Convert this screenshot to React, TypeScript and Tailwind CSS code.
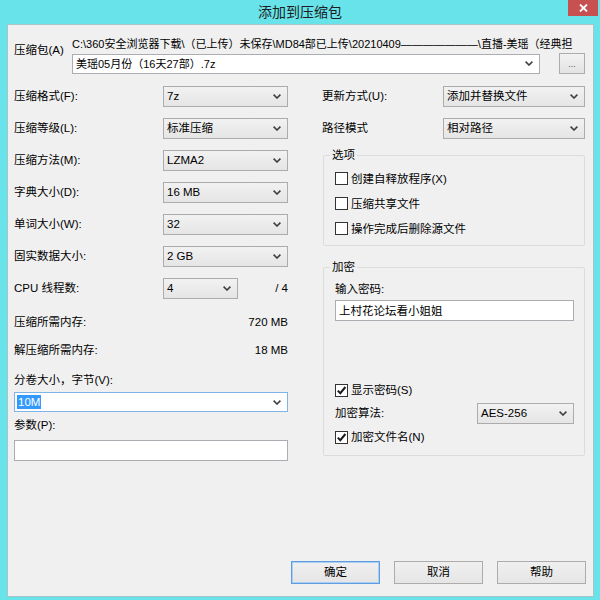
import React from 'react';

const font = "font-['Liberation_Sans','Noto_Sans_CJK_SC',sans-serif]";

function Chevron() {
  return (
    <svg width="8" height="5" viewBox="0 0 8 5" className="shrink-0">
      <path d="M0.6 0.6 L4 4 L7.4 0.6" fill="none" stroke="#404040" strokeWidth="1.6" />
    </svg>
  );
}

const Select: React.FC<{ value: string; className?: string }> = ({ value, className = '' }) => (
  <div
    className={`h-[21px] flex items-center justify-between border border-[#acacac] bg-linear-to-b from-[#f2f2f2] to-[#e5e5e5] pl-[3px] pr-[6px] leading-[14px] ${className}`}
  >
    <span>{value}</span>
    <Chevron />
  </div>
);

const Checkbox: React.FC<{ label: React.ReactNode; checked?: boolean }> = ({ label, checked }) => (
  <div className="flex items-center">
    <div className="w-[13px] h-[13px] border border-[#333] bg-white flex items-center justify-center shrink-0">
      {checked && (
        <svg width="11" height="11" viewBox="0 0 11 11">
          <path d="M1.8 5.6 L4.3 8.2 L9.4 2" fill="none" stroke="#1a1a1a" strokeWidth="2" />
        </svg>
      )}
    </div>
    <span className="ml-[3px] leading-[16px]">{label}</span>
  </div>
);

const Button: React.FC<{ label: string; focused?: boolean }> = ({ label, focused }) => (
  <div
    className={`w-[89px] h-[23px] flex items-center justify-center border bg-linear-to-b from-[#f0f0f0] to-[#e5e5e5] ${
      focused ? 'border-[#5e9ee0] shadow-[inset_0_0_0_1px_#a9cff5]' : 'border-[#acacac]'
    }`}
  >
    {label}
  </div>
);

const leftRows = [
  ['压缩格式(F):', '7z'],
  ['压缩等级(L):', '标准压缩'],
  ['压缩方法(M):', 'LZMA2'],
  ['字典大小(D):', '16 MB'],
  ['单词大小(W):', '32'],
  ['固实数据大小:', '2 GB'],
];

export default function App() {
  return (
    <div className={`w-[600px] h-[600px] bg-[#69e3ea] flex flex-col text-[11.5px] text-black ${font}`}>
      {/* title bar */}
      <div className="h-[24px] shrink-0 relative flex items-center justify-center">
        <span className="text-[14px] text-[#1e1e1e] leading-[18px]">添加到压缩包</span>
        <div className="absolute right-[2px] top-0 w-[30px] h-[16px] bg-[#c75050] flex items-center justify-center">
          <svg width="9" height="8" viewBox="0 0 9 8">
            <path d="M1 0.5 L8 7.5 M8 0.5 L1 7.5" stroke="#fff" strokeWidth="1.8" />
          </svg>
        </div>
      </div>

      {/* client */}
      <div className="flex-1 ml-[7px] mr-[6px] mb-[3px] border border-[#a9c4c7] bg-[#f0f0f0] flex flex-col pl-[6px] pr-[7px] pb-[12px]">
        {/* archive path */}
        <div className="flex pt-[12px]">
          <div className="w-[58px] shrink-0 pt-[6px] leading-[14px]">压缩包(A)</div>
          <div className="flex-1 min-w-0 text-[11px]">
            <div className="h-[15px] leading-[15px] whitespace-nowrap overflow-hidden w-[520px]">
              C:\360安全浏览器下载\（已上传）未保存\MD84部已上传\20210409———————\直播-美瑶（经典担
            </div>
            <div className="flex items-center mt-[1px]">
              <div className="w-[468px] h-[20px] bg-white border border-[#abadb3] flex items-center justify-between pl-[3px] pr-[6px] leading-[14px]">
                <span>美瑶05月份（16天27部）.7z</span>
                <Chevron />
              </div>
              <div className="ml-[19px] w-[26px] h-[21px] border border-[#acacac] bg-linear-to-b from-[#f2f2f2] to-[#e3e3e3] flex items-center justify-center text-[9px] text-[#555] leading-[10px]">
                ...
              </div>
            </div>
          </div>
        </div>

        {/* main columns */}
        <div className="flex mt-[6px]">
          {/* left */}
          <div className="w-[274px] shrink-0 flex flex-col">
            {leftRows.map(([label, value]) => (
              <div key={label} className="h-[32px] flex items-center">
                <div className="w-[149px] leading-[16px]">{label}</div>
                <Select value={value} className="w-[125px]" />
              </div>
            ))}
            <div className="h-[32px] flex items-center">
              <div className="w-[149px] leading-[16px]">CPU 线程数:</div>
              <Select value="4" className="w-[75px]" />
              <div className="ml-auto leading-[16px]">/ 4</div>
            </div>
            <div className="mt-[4px] h-[28px] flex items-center justify-between leading-[16px]">
              <span>压缩所需内存:</span>
              <span>720 MB</span>
            </div>
            <div className="h-[28px] flex items-center justify-between leading-[16px]">
              <span>解压缩所需内存:</span>
              <span>18 MB</span>
            </div>
            <div className="mt-[8px] h-[16px] leading-[16px]">分卷大小，字节(V):</div>
            <div className="mt-[4px] h-[20px] bg-white border border-[#7eb4ea] flex items-center justify-between pl-[2px] pr-[6px]">
              <span className="bg-[#3399ff] text-white leading-[14px] px-[1px]">10M</span>
              <Chevron />
            </div>
            <div className="mt-[5px] h-[16px] leading-[16px]">参数(P):</div>
            <div className="mt-[7px] h-[21px] bg-white border border-[#abadb3]" />
          </div>

          {/* right */}
          <div className="ml-[34px] w-[263px] shrink-0 flex flex-col">
            <div className="h-[32px] flex items-center">
              <div className="w-[121px] leading-[16px]">更新方式(U):</div>
              <Select value="添加并替换文件" className="w-[142px]" />
            </div>
            <div className="h-[32px] flex items-center">
              <div className="w-[121px] leading-[16px]">路径模式</div>
              <Select value="相对路径" className="w-[142px]" />
            </div>

            {/* options group */}
            <div className="mt-[11px] ml-[1px] relative border border-[#dcdcdc] rounded-[2px] pt-[10px] pb-[4px] pl-[11px]">
              <span className="absolute -top-[9px] left-[6px] px-[2px] bg-[#f0f0f0] leading-[16px]">选项</span>
              <div className="h-[25px] flex items-center">
                <Checkbox label="创建自释放程序(X)" />
              </div>
              <div className="h-[25px] flex items-center">
                <Checkbox label="压缩共享文件" />
              </div>
              <div className="h-[25px] flex items-center">
                <Checkbox label="操作完成后删除源文件" />
              </div>
            </div>

            {/* encryption group */}
            <div className="mt-[21px] ml-[1px] relative border border-[#dcdcdc] rounded-[2px] pt-[13px] pb-[6px] pl-[11px] pr-[10px]">
              <span className="absolute -top-[9px] left-[6px] px-[2px] bg-[#f0f0f0] leading-[16px]">加密</span>
              <div className="h-[16px] leading-[16px]">输入密码:</div>
              <div className="mt-[3px] h-[21px] bg-white border border-[#abadb3] flex items-center pl-[3px] text-[11.5px] leading-[16px]">
                上村花论坛看小姐姐
              </div>
              <div className="mt-[58px] h-[22px] flex items-center">
                <Checkbox label="显示密码(S)" checked />
              </div>
              <div className="h-[24px] flex items-center justify-between">
                <span className="leading-[16px]">加密算法:</span>
                <Select value="AES-256" className="w-[97px] h-[20px]" />
              </div>
              <div className="h-[24px] flex items-center">
                <Checkbox label="加密文件名(N)" checked />
              </div>
            </div>
          </div>
        </div>

        {/* buttons */}
        <div className="mt-auto flex justify-end gap-[14px]">
          <Button label="确定" focused />
          <Button label="取消" />
          <Button label="帮助" />
        </div>
      </div>
    </div>
  );
}
